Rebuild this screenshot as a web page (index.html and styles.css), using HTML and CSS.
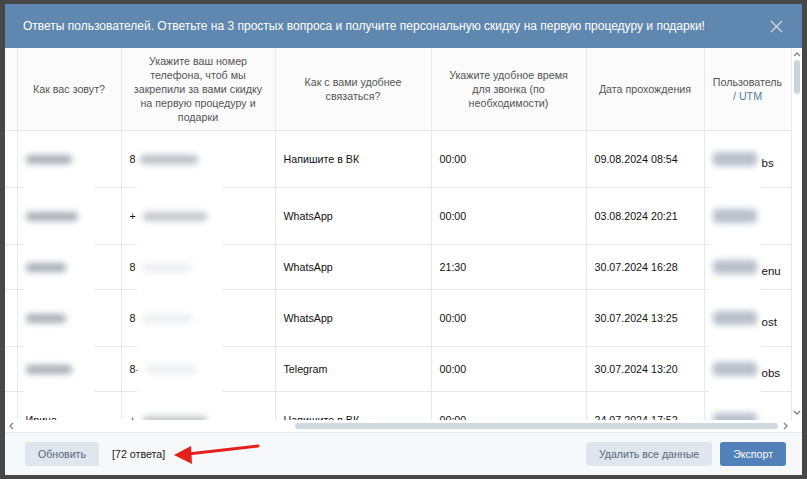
FILE: index.html
```html
<!doctype html>
<html>
  <head>
    <meta charset="utf-8">
    <title>Ответы пользователей</title>
    <link rel="stylesheet" href="styles.css">
  </head>
  <body>
    <div class="screen">
      <div class="modal">
        <div class="modal-head">
          <span class="modal-title">Ответы пользователей. Ответьте на 3 простых вопроса и получите персональную скидку на первую процедуру и подарки!</span>
          <svg class="close" width="13" height="13" viewBox="0 0 13 13"><path d="M1 1L12 12M12 1L1 12"/></svg>
        </div>

        <div class="modal-body">
          <div class="grid-area">
            <div class="table-view">
              <table class="answers">
                <colgroup>
                  <col class="c-edge"><col class="c-name"><col class="c-phone"><col class="c-contact"><col class="c-time"><col class="c-date"><col class="c-utm">
                </colgroup>
                <thead>
                  <tr class="head-row">
                    <th></th>
                    <th>Как вас зовут?</th>
                    <th>Укажите ваш номер<br>телефона, чтоб мы<br>закрепили за вами скидку<br>на первую процедуру и<br>подарки</th>
                    <th>Как с вами удобнее<br>связаться?</th>
                    <th>Укажите удобное время<br>для звонка (по<br>необходимости)</th>
                    <th>Дата прохождения</th>
                    <th>Пользователь<br><a class="utm-link">/ UTM</a></th>
                  </tr>
                </thead>
                <tbody>
                  <tr class="row-tall">
                    <td></td>
                    <td><span class="blob blob-m"></span></td>
                    <td>8<span class="blob blob-phone"></span></td>
                    <td>Напишите в ВК</td>
                    <td>00:00</td>
                    <td>09.08.2024 08:54</td>
                    <td class="utm"><span class="blob blob-utm"></span><span class="frag">bs</span></td>
                  </tr>
                  <tr class="row-tall">
                    <td></td>
                    <td><span class="blob blob-l"></span></td>
                    <td>+<span class="blob blob-phone-l"></span></td>
                    <td>WhatsApp</td>
                    <td>00:00</td>
                    <td>03.08.2024 20:21</td>
                    <td class="utm"><span class="blob blob-utm"></span><span class="frag"></span></td>
                  </tr>
                  <tr class="row-short">
                    <td></td>
                    <td><span class="blob blob-s"></span></td>
                    <td>8<span class="blob blob-ghost"></span></td>
                    <td>WhatsApp</td>
                    <td>21:30</td>
                    <td>30.07.2024 16:28</td>
                    <td class="utm"><span class="blob blob-utm"></span><span class="frag">enu</span></td>
                  </tr>
                  <tr class="row-tall">
                    <td></td>
                    <td><span class="blob blob-s"></span></td>
                    <td>8<span class="blob blob-ghost"></span></td>
                    <td>WhatsApp</td>
                    <td>00:00</td>
                    <td>30.07.2024 13:25</td>
                    <td class="utm"><span class="blob blob-utm"></span><span class="frag">ost</span></td>
                  </tr>
                  <tr class="row-short">
                    <td></td>
                    <td><span class="blob blob-m"></span></td>
                    <td>8-<span class="blob blob-ghost"></span></td>
                    <td>Telegram</td>
                    <td>00:00</td>
                    <td>30.07.2024 13:20</td>
                    <td class="utm"><span class="blob blob-utm"></span><span class="frag">obs</span></td>
                  </tr>
                  <tr class="row-tall">
                    <td></td>
                    <td>Ирина</td>
                    <td>+<span class="blob blob-phone-l"></span></td>
                    <td>Напишите в ВК</td>
                    <td>00:00</td>
                    <td>24.07.2024 17:52</td>
                    <td class="utm"><span class="blob blob-utm"></span><span class="frag"></span></td>
                  </tr>
                </tbody>
              </table>
              <div class="mask mask-name"></div>
              <div class="mask mask-phone"></div>
              <div class="mask mask-utm"></div>
            </div>

            <div class="hscroll">
              <svg class="arrow-l" width="6" height="8" viewBox="0 0 6 8"><path d="M5 1L2 4L5 7"/></svg>
              <div class="hscroll-track"><div class="hscroll-thumb"></div></div>
              <svg class="arrow-r" width="6" height="8" viewBox="0 0 6 8"><path d="M1 1L4 4L1 7"/></svg>
            </div>
          </div>

          <div class="vscroll">
            <svg class="arrow-u" width="8" height="6" viewBox="0 0 8 6"><path d="M1 5L4 2L7 5"/></svg>
            <div class="vscroll-thumb"></div>
            <svg class="arrow-d" width="8" height="6" viewBox="0 0 8 6"><path d="M1 1L4 4L7 1"/></svg>
          </div>
        </div>

        <div class="modal-foot">
          <button class="btn btn-light">Обновить</button>
          <span class="count">[72 ответа]</span>
          <svg class="pointer" width="95" height="24" viewBox="0 0 95 24">
            <path class="pointer-line" d="M88 3L18 11"/>
            <path class="pointer-head" d="M4 12L21 3L22 21Z"/>
          </svg>
          <div class="foot-right">
            <button class="btn btn-light">Удалить все данные</button>
            <button class="btn btn-primary">Экспорт</button>
          </div>
        </div>
      </div>
    </div>
  </body>
</html>
```

FILE: styles.css
```css
body {
  margin: 0;
  background: #474747;
  font-family: "Liberation Sans", Arial, sans-serif;
}
.screen {
  height: 479px;
  padding: 4px 5px;
  box-sizing: border-box;
}
.modal {
  height: 471px;
  display: flex;
  flex-direction: column;
  background: #fff;
}

/* header */
.modal-head {
  height: 44px;
  flex: none;
  display: flex;
  align-items: center;
  justify-content: space-between;
  padding: 0 19px 0 18px;
  background: #5f87af;
  color: #fff;
  font-size: 12px;
}
.close path { stroke: #cfdae6; stroke-width: 1.3; fill: none; }

/* body */
.modal-body {
  height: 384px;
  flex: none;
  display: flex;
}
.grid-area {
  width: 787px;
  display: flex;
  flex-direction: column;
}
.table-view {
  position: relative;
  height: 372px;
  overflow: hidden;
}
.answers {
  width: 786px;
  table-layout: fixed;
  border-collapse: collapse;
  font-size: 10.7px;
}
.c-edge { width: 12px; }
.c-name { width: 104px; }
.c-phone { width: 154px; }
.c-contact { width: 156px; }
.c-time { width: 155px; }
.c-date { width: 118px; }
.c-utm { width: 87px; }

.answers th, .answers td {
  border: 1px solid #e7e8ec;
  padding: 0 8px;
  white-space: nowrap;
}
.answers tr > :first-child { border-left: none; }
.answers thead th { border-top: none; }
.head-row { height: 82px; }
.answers th {
  font-weight: normal;
  color: #555;
  line-height: 14px;
  text-align: center;
  background: #fbfbfc;
}
.utm-link { color: #4f7bab; }
.answers td { color: #111; }
.row-tall { height: 57px; }
.row-short { height: 45px; }

/* blurred personal data */
.blob {
  position: relative;
  z-index: 2;
  display: inline-block;
  vertical-align: middle;
  height: 9px;
  border-radius: 4px;
  background: #a8aeb6;
  filter: blur(3px);
}
.blob-s { width: 40px; }
.blob-m { width: 46px; }
.blob-l { width: 52px; }
.blob-phone { width: 58px; margin-left: 5px; background: #b9bec4; }
.blob-phone-l { width: 64px; margin-left: 7px; background: #c2c6cb; }
.blob-ghost { width: 50px; margin-left: 7px; background: #eceef0; }
.utm {
  padding-left: 6px;
}
.blob-utm {
  width: 44px;
  height: 14px;
  background: #b8c0ca;
}
.frag {
  display: inline-block;
  vertical-align: bottom;
  margin-left: 5px;
  position: relative;
  top: 3px;
  z-index: 2;
  font-size: 11.5px;
}
.mask {
  position: absolute;
  z-index: 1;
  background: #fff;
  filter: blur(1px);
}
.mask-name { left: 19px; top: 100px; width: 70px; height: 254px; }
.mask-phone { left: 132px; top: 100px; width: 85px; height: 272px; }
.mask-utm { left: 704px; top: 92px; width: 52px; height: 280px; }

/* scrollbars */
.hscroll {
  height: 12px;
  display: flex;
  align-items: center;
}
.hscroll svg, .vscroll svg { flex: none; }
.hscroll path, .vscroll path { stroke: #7d848c; stroke-width: 1.3; fill: none; }
.arrow-l { margin: 0 5px 0 3px; }
.arrow-r { margin: 0 3px 0 5px; }
.hscroll-track {
  flex: 1;
  display: flex;
  justify-content: flex-end;
}
.hscroll-thumb {
  width: 483px;
  height: 6px;
  border-radius: 3px;
  background: #d1d8df;
}
.vscroll {
  width: 10px;
  display: flex;
  flex-direction: column;
  align-items: center;
  padding-top: 3px;
}
.vscroll-thumb {
  width: 6px;
  height: 34px;
  margin-top: 3px;
  border-radius: 3px;
  background: #cbd3db;
}
.arrow-d { margin-top: auto; margin-bottom: 16px; }

/* footer */
.modal-foot {
  position: relative;
  flex: 1;
  display: flex;
  align-items: center;
  padding: 0 16px 0 20px;
  border-top: 1px solid #e7e8ec;
  background: #f7f8fa;
}
.btn {
  height: 24px;
  padding: 0 13px;
  border: none;
  border-radius: 3px;
  font-family: inherit;
  font-size: 10.6px;
}
.btn-light { background: #dfe6ed; color: #55677d; }
.btn-primary { background: #5181b8; color: #fff; }
.count {
  margin-left: 13px;
  font-size: 10.7px;
  color: #222;
}
.pointer {
  position: absolute;
  left: 165px;
  top: 10px;
}
.pointer-line { stroke: #e3201c; stroke-width: 3; stroke-linecap: round; }
.pointer-head { fill: #e3201c; }
.foot-right {
  margin-left: auto;
  display: flex;
  gap: 8px;
}
```
